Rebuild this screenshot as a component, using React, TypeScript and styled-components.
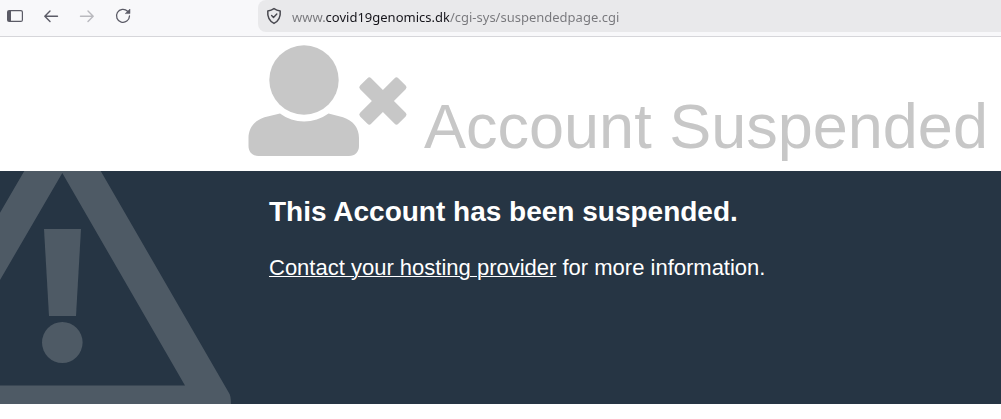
import React from "react";
import styled, { createGlobalStyle } from "styled-components";

const GlobalStyle = createGlobalStyle`
  * { box-sizing: border-box; }
  body {
    margin: 0;
    background: #ffffff;
    font-family: "Liberation Sans", Arial, sans-serif;
  }
`;

const Toolbar = styled.nav`
  display: flex;
  align-items: flex-start;
  height: 37px;
  background: #f8f8fa;
  border-bottom: 1px solid #d6d6da;
`;

const Controls = styled.div`
  display: flex;
  flex: none;
  gap: 16px;
  width: 258px;
  padding: 6px 0 0 5px;
`;

const IconButton = styled.button`
  display: block;
  width: 20px;
  height: 20px;
  padding: 0;
  border: 0;
  background: none;
  color: #5b5b66;

  &:disabled {
    color: #b9b9be;
  }
`;

const Icon = styled.svg`
  display: block;
  flex: none;
`;

const AddressBar = styled.label`
  display: flex;
  flex: 1;
  align-items: center;
  gap: 10px;
  height: 32px;
  padding-left: 8px;
  border-radius: 8px 0 0 8px;
  background: #e9e9eb;
`;

/* The registrable domain is drawn darker than the rest of the address. */
const AddressInput = styled.input`
  flex: 1;
  min-width: 0;
  height: 20px;
  margin-top: 2px;
  padding: 0;
  border: 0;
  outline: 0;
  font: 13px/20px "Noto Sans", sans-serif;
  color: transparent;
  background: linear-gradient(
    90deg,
    #77777b 33px,
    #15141a 33px 157px,
    #77777b 157px
  );
  background-clip: text;
  -webkit-background-clip: text;
`;

const Header = styled.header`
  display: flex;
  align-items: flex-start;
  gap: 16px;
  padding: 8px 0 14px 248px;
  color: #c7c7c7;
`;

const Title = styled.h1`
  margin: 0;
  padding-top: 50px;
  font-size: 63px;
  line-height: 62px;
  font-weight: 400;
  white-space: nowrap;
`;

const Notice = styled.main`
  display: flex;
  gap: 38px;
  background: #263544;
  color: #ffffff;
`;

const Message = styled.section`
  padding-top: 25px;
`;

const Heading = styled.h2`
  margin: 0 0 24px;
  font-size: 28px;
  line-height: 32px;
`;

const Text = styled.p`
  margin: 0;
  font-size: 22px;
  line-height: 32px;
`;

const Link = styled.a`
  color: inherit;
  text-decoration-thickness: 1px;
`;

export default function App() {
  return (
    <>
      <GlobalStyle />
      <Toolbar aria-label="Browser">
        <Controls>
          <IconButton aria-label="Sidebar">
            <Icon width="20" height="20" viewBox="0 0 20 20" fill="none">
              <rect x="2.6" y="4.6" width="14.8" height="10.8" rx="1.5" stroke="currentColor" strokeWidth="1.2" />
              <path d="M3 5h3v10H3z" fill="currentColor" />
            </Icon>
          </IconButton>
          <IconButton aria-label="Back">
            <Icon width="20" height="20" viewBox="0 0 20 20" fill="none">
              <path d="M16.500 10.200H4M9 5 3.800 10.200 9 15.400" stroke="currentColor" strokeWidth="1.4" strokeLinecap="round" strokeLinejoin="round" />
            </Icon>
          </IconButton>
          <IconButton aria-label="Forward" disabled>
            <Icon width="20" height="20" viewBox="0 0 20 20" fill="none">
              <path d="M3.500 10.200H16M11 5l5.200 5.200L11 15.400" stroke="currentColor" strokeWidth="1.4" strokeLinecap="round" strokeLinejoin="round" />
            </Icon>
          </IconButton>
          <IconButton aria-label="Reload">
            <Icon width="20" height="20" viewBox="0 0 20 20" fill="none">
              <path d="M14.6 5.2A6.5 6.5 0 1 0 16.5 10" stroke="currentColor" strokeWidth="1.3" strokeLinecap="round" />
              <path d="M17 3v4.600h-4.800z" fill="currentColor" stroke="currentColor" strokeWidth=".5" strokeLinejoin="round" />
            </Icon>
          </IconButton>
        </Controls>
        <AddressBar>
          <Icon width="16" height="18" viewBox="0 0 16 18" fill="none" stroke="#48484f" strokeLinecap="round" strokeLinejoin="round">
            <path d="M8 1.600C10 3 12 3.600 14.200 3.900 14.700 9.200 13.400 13.700 8 16.400 2.600 13.700 1.300 9.200 1.800 3.900 4 3.600 6 3 8 1.600z" strokeWidth="1.5" />
            <path d="m5.600 8.600 1.900 1.900 3.300-3.400" strokeWidth="1.4" />
          </Icon>
          <AddressInput
            aria-label="Address"
            spellCheck={false}
            defaultValue="www.covid19genomics.dk/cgi-sys/suspendedpage.cgi"
          />
        </AddressBar>
      </Toolbar>
      <Header>
        <Icon width="160" height="112" viewBox="0 0 160 112" fill="currentColor" aria-hidden="true">
          <circle cx="56" cy="35" r="34.7" />
          <path d="M32 68.5C46 79 66 79 80.500 68.500L95 72.300C105 75.500 111 83 111 93V101C111 107 107 111 101 111H10.500C4.500 111 .5 107 .5 101V93C.5 83 6.500 75.500 16.500 72.300Z" />
          <g transform="translate(134.900 56)rotate(45)">
            <rect x="-27" y="-7.800" width="54" height="15.600" rx="2.600" />
            <rect x="-7.800" y="-27" width="15.600" height="54" rx="2.600" />
          </g>
        </Icon>
        <Title>Account Suspended</Title>
      </Header>
      <Notice>
        <Icon width="231" height="233" viewBox="0 0 231 233" fill="#4e5a65" aria-hidden="true">
          <path
            fillRule="evenodd"
            d="M24.300 0H100.700L229 222Q231 225 231 233H-106L-60 214.600 0 41.700ZM62.300 2 0 109-62 214.600H185Z"
          />
          <path d="M44 58H81L76 145H49Z" />
          <ellipse cx="62.300" cy="171.500" rx="20.300" ry="20.500" />
        </Icon>
        <Message>
          <Heading>This Account has been suspended.</Heading>
          <Text>
            <Link href="#contact">Contact your hosting provider</Link> for more information.
          </Text>
        </Message>
      </Notice>
    </>
  );
}
